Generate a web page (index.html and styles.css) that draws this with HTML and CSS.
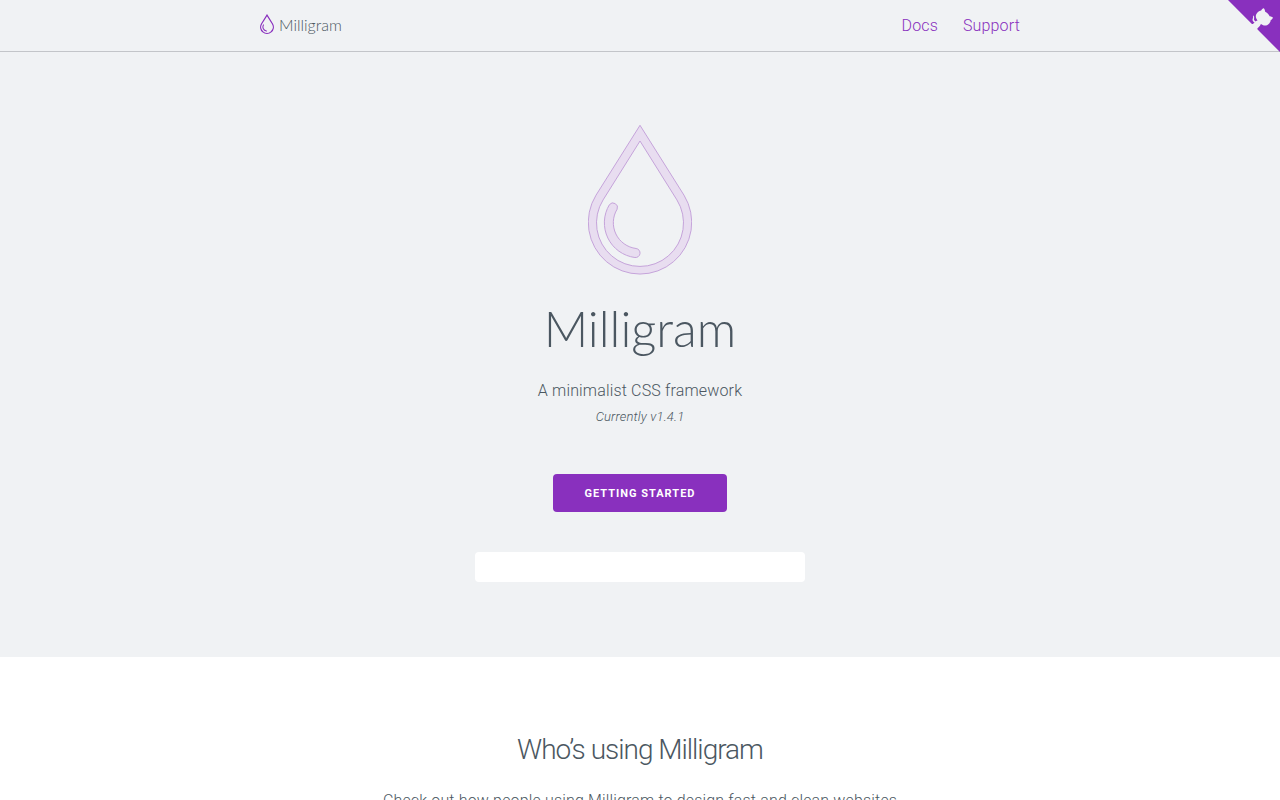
FILE: index.html
```html
<!DOCTYPE html>
<html lang="en">
<head>
<meta charset="utf-8">
<meta name="viewport" content="width=device-width, initial-scale=1">
<title>Milligram</title>
<link rel="stylesheet" href="styles.css">
</head>
<body>
<nav class="navigation">
  <div class="container navigation-row">
    <a class="brand" href="#">
      <svg class="brand-icon" viewBox="0 0 104 150" aria-hidden="true">
        <path class="brand-drop" d="M52 8 11.500 73A47.500 47.500 0 1 0 92.500 73Z"/>
        <path class="brand-shine" d="M25 82A31 31 0 0 0 48 128"/>
      </svg>
      <span class="brand-name">Milligram</span>
    </a>
    <ul class="links">
      <li><a class="link" href="#docs">Docs</a></li>
      <li><a class="link" href="#support">Support</a></li>
    </ul>
  </div>
  <a class="corner" href="#github" aria-label="GitHub">
    <svg class="corner-art" viewBox="0 0 250 250" aria-hidden="true">
      <path class="corner-back" d="M0,0 L115,115 L130,115 L142,142 L250,250 L250,0 Z"/>
      <path class="corner-cat" d="M128.300,109.000 C113.800,99.700 119.000,89.600 119.000,89.600 C122.000,82.700 120.500,78.600 120.500,78.600 C119.200,72.000 123.400,76.300 123.400,76.300 C127.300,80.900 125.500,87.300 125.500,87.300 C122.900,97.600 130.600,101.900 134.400,103.200"/>
      <path class="corner-cat" d="M115.000,115.000 C114.900,115.100 118.700,116.500 119.800,115.400 L133.700,101.600 C136.900,99.200 139.900,98.400 142.200,98.600 C133.800,88.000 127.500,74.400 143.800,58.000 C148.500,53.400 154.000,51.200 159.700,51.000 C160.300,49.400 163.200,43.600 171.400,40.100 C171.400,40.100 176.100,42.500 178.800,56.200 C183.100,58.600 187.200,61.800 190.900,65.400 C194.500,69.000 197.700,73.200 200.100,77.600 C213.800,80.200 216.300,84.900 216.300,84.900 C212.700,93.100 206.900,96.000 205.400,96.600 C205.100,102.400 203.000,107.800 198.300,112.500 C181.900,128.900 168.300,122.500 157.700,114.100 C157.900,116.900 156.700,120.900 152.700,124.900 L141.000,136.500 C139.800,137.700 141.600,141.900 141.800,141.800 Z"/>
    </svg>
  </a>
</nav>
<main>
  <header class="hero">
    <svg class="hero-drop" viewBox="0 0 104 150" aria-hidden="true">
      <path fill-rule="evenodd" d="M52 .3 8 70.200A51.700 51.700 0 1 0 96 70.200ZM52 16 15.100 74.900A43.500 43.500 0 1 0 88.900 74.900Z"/>
      <path d="M21.400 79.700A35 35 0 0 0 46.900 132.500A4.500 4.500 0 0 0 48.100 123.500A26 26 0 0 1 29.100 84.200A4.500 4.500 0 0 0 21.400 79.700Z"/>
    </svg>
    <h1 class="hero-title">Milligram</h1>
    <p class="hero-text">A minimalist CSS framework</p>
    <p class="hero-version">Currently v1.4.1</p>
    <a class="button" href="#getting-started">Getting Started</a>
    <div class="panel"></div>
  </header>
  <section class="container section">
    <h2 class="section-title">Who’s using Milligram</h2>
    <p class="section-text">Check out how people using Milligram to design fast and clean websites</p>
  </section>
</main>
</body>
</html>
```
FILE: styles.css
```css
* {
  box-sizing: border-box;
}

body {
  margin: 0;
  background: #fff;
  color: #4b5761;
  font-family: Roboto, sans-serif;
  font-size: 16px;
  font-weight: 300;
  letter-spacing: .01em;
  line-height: 26px;
}

h1, h2, p, ul {
  margin: 0;
  padding: 0;
}

.container {
  width: 100%;
  max-width: 800px;
  margin: 0 auto;
  padding: 0 20px;
}

.navigation {
  position: relative;
  background: #f0f2f4;
  border-bottom: 1px solid #c3c5c9;
}

.navigation-row {
  display: flex;
  align-items: center;
  justify-content: space-between;
  min-height: 51px;
}

.brand {
  display: flex;
  align-items: center;
  gap: 5px;
  color: #4b5761;
  text-decoration: none;
}

.brand-icon {
  width: 14px;
  height: 20px;
  margin-bottom: 4px;
  fill: none;
  stroke: #8930be;
  stroke-linecap: round;
}

.brand-drop {
  stroke-width: 9px;
}

.brand-shine {
  stroke-width: 8px;
}

.brand-name {
  padding-bottom: 2px;
  font-family: Lato, sans-serif;
  font-size: 16px;
  letter-spacing: 0;
  line-height: 24px;
}

.links {
  display: flex;
  gap: 25px;
  list-style: none;
}

.link {
  color: #8930be;
  text-decoration: none;
}

.corner {
  position: absolute;
  top: 0;
  right: 0;
  width: 52px;
  height: 52px;
}

.corner-art {
  display: block;
  width: 100%;
}

.corner-back {
  fill: #8930be;
}

.corner-cat {
  fill: #f0f2f4;
}

.hero {
  display: flex;
  flex-direction: column;
  align-items: center;
  padding: 73px 20px 75px;
  background: #f0f2f4;
  text-align: center;
}

.hero-drop {
  width: 104px;
  height: 150px;
  fill: #e8ddf0;
  stroke: #c5a3da;
  stroke-width: 1px;
}

.hero-title {
  margin-top: 23px;
  font-family: Lato, sans-serif;
  font-size: 49px;
  font-weight: 300;
  letter-spacing: 0;
  line-height: 60px;
}

.hero-text {
  margin-top: 20px;
}

.hero-version {
  font-size: 13px;
  font-style: italic;
}

.button {
  margin-top: 44px;
  padding: 1px 31px 0;
  border-radius: 4px;
  background: #8930be;
  color: #fff;
  font-size: 11px;
  font-weight: 700;
  letter-spacing: 1px;
  line-height: 37px;
  text-decoration: none;
  text-transform: uppercase;
}

.panel {
  width: 100%;
  max-width: 330px;
  min-height: 30px;
  margin-top: 40px;
  border-radius: 4px;
  background: #fff;
}

.section {
  padding-top: 75px;
  padding-bottom: 75px;
  text-align: center;
}

.section-title {
  margin-bottom: 20px;
  font-size: 28px;
  font-weight: 300;
  letter-spacing: -1px;
  line-height: 36px;
}
```
